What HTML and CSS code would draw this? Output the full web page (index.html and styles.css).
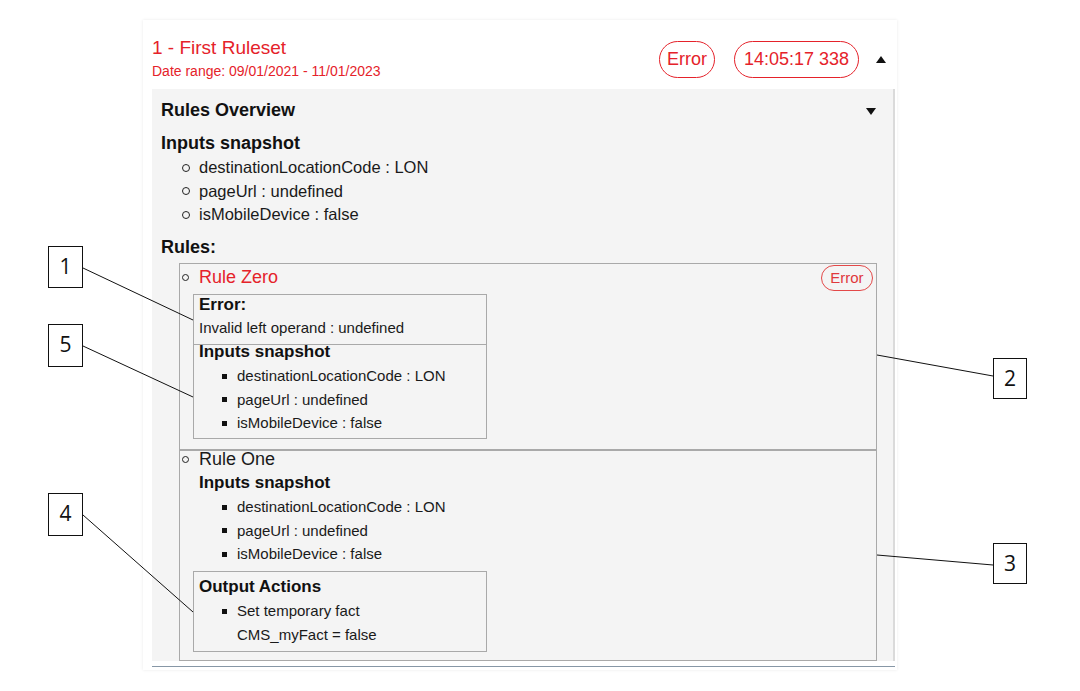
FILE: index.html
```html
<!DOCTYPE html>
<html lang="en">
<head>
<meta charset="utf-8">
<title>Ruleset log</title>
<link rel="stylesheet" href="styles.css">
</head>
<body>
<div class="page">
  <section class="card">
    <header class="rs-header">
      <div class="rs-title-block">
        <div class="rs-title">1 - First Ruleset</div>
        <div class="rs-date">Date range: 09/01/2021 - 11/01/2023</div>
      </div>
      <div class="rs-meta">
        <span class="pill pill-lg">Error</span>
        <span class="pill pill-lg pill-time">14:05:17 338</span>
        <span class="caret caret-up"></span>
      </div>
    </header>

    <div class="overview">
      <div class="overview-head">
        <h2 class="overview-title">Rules Overview</h2>
        <span class="caret caret-down"></span>
      </div>

      <h3 class="sec-title">Inputs snapshot</h3>
      <ul class="circle-list">
        <li>destinationLocationCode : LON</li>
        <li>pageUrl : undefined</li>
        <li>isMobileDevice : false</li>
      </ul>

      <h3 class="sec-title rules-title">Rules:</h3>
      <ul class="rules">
        <li class="rule rule-error">
          <div class="rule-head">
            <span class="rule-name">Rule Zero</span>
            <span class="pill pill-sm">Error</span>
          </div>
          <div class="box">
            <div class="box-sec err-sec">
              <h4 class="box-title">Error:</h4>
              <p class="err-msg">Invalid left operand : undefined</p>
            </div>
            <div class="box-sec inputs-sec">
              <h4 class="box-title tight">Inputs snapshot</h4>
              <ul class="square-list">
                <li>destinationLocationCode : LON</li>
                <li>pageUrl : undefined</li>
                <li>isMobileDevice : false</li>
              </ul>
            </div>
          </div>
        </li>
        <li class="rule rule-ok">
          <div class="rule-head">
            <span class="rule-name">Rule One</span>
          </div>
          <div class="plain-sec">
            <h4 class="box-title">Inputs snapshot</h4>
            <ul class="square-list">
              <li>destinationLocationCode : LON</li>
              <li>pageUrl : undefined</li>
              <li>isMobileDevice : false</li>
            </ul>
          </div>
          <div class="box out-box">
            <h4 class="box-title">Output Actions</h4>
            <ul class="square-list tall">
              <li>Set temporary fact<div class="sub-line">CMS_myFact = false</div></li>
            </ul>
          </div>
        </li>
      </ul>
    </div>
    <div class="card-foot"></div>
  </section>

  <svg class="callout-lines" width="1080" height="691" viewBox="0 0 1080 691" aria-hidden="true">
    <line x1="83" y1="268" x2="193" y2="320"/>
    <line x1="83" y1="346" x2="193" y2="397"/>
    <line x1="83" y1="515" x2="193" y2="612"/>
    <line x1="877" y1="355" x2="993" y2="376"/>
    <line x1="877" y1="555" x2="993" y2="565"/>
  </svg>
  <div class="callout c1">1</div>
  <div class="callout c5">5</div>
  <div class="callout c4">4</div>
  <div class="callout c2">2</div>
  <div class="callout c3">3</div>
</div>
</body>
</html>
```

FILE: styles.css
```css
* { box-sizing: border-box; }

html, body {
  margin: 0;
  padding: 0;
  background: #ffffff;
}

body {
  font-family: "Liberation Sans", Arial, sans-serif;
  color: #111111;
}

.page {
  position: relative;
  width: 1080px;
  height: 691px;
  overflow: hidden;
  padding-top: 20px;
}

/* ---------- card ---------- */
.card {
  margin-left: 143px;
  width: 754px;
  padding: 0 2px 3px 9px;
  background: #ffffff;
  box-shadow: 0 0 3px rgba(0, 0, 0, 0.09);
}

.rs-header {
  display: flex;
  justify-content: space-between;
  align-items: center;
  padding: 15px 9px 7px 0;
}

.rs-title {
  color: #e5222a;
  font-size: 19px;
  line-height: 25px;
}

.rs-date {
  color: #e5222a;
  font-size: 14px;
  line-height: 22px;
}

.rs-meta {
  display: flex;
  align-items: center;
  padding-top: 2px;
}

.pill {
  display: inline-block;
  color: #e5222a;
  border: 1.5px solid #e5222a;
  white-space: nowrap;
}

.pill-lg {
  height: 37px;
  line-height: 34px;
  padding: 0 7px;
  font-size: 18px;
  border-radius: 19px;
  margin-right: 19px;
}

.pill-lg.pill-time {
  padding: 0 9px;
  margin-right: 17px;
}

.caret {
  display: inline-block;
  width: 0;
  height: 0;
  border-left: 5.5px solid transparent;
  border-right: 5.5px solid transparent;
}

.caret-up {
  border-bottom: 7px solid #111111;
}

.caret-down {
  border-top: 7px solid #111111;
}

/* ---------- overview body ---------- */
.overview {
  background: #f4f4f4;
  padding: 9px 17px 0 9px;
  border-right: 2px solid #dadada;
}

.overview-head {
  display: flex;
  justify-content: space-between;
  align-items: center;
  height: 24px;
}

.overview-title {
  margin: 0;
  font-size: 18px;
  font-weight: bold;
  line-height: 24px;
}

.overview-head .caret-down {
  margin-top: 2px;
}

.sec-title {
  margin: 9px 0 0 0;
  font-size: 18px;
  font-weight: bold;
  line-height: 24px;
}

.rules-title {
  margin-top: 8.5px;
}

.circle-list {
  list-style: none;
  margin: 1px 0 0 0;
  padding: 0 0 0 36px;
  font-size: 16.5px;
  line-height: 23.5px;
  color: #1a1a1a;
}

.circle-list li::before {
  content: "";
  display: inline-block;
  vertical-align: middle;
  width: 6px;
  height: 6px;
  border: 1.2px solid #222;
  border-radius: 50%;
  margin: -2px 9px 0 -15px;
}

/* ---------- rules ---------- */
.rules {
  list-style: none;
  margin: 4px -1px -5px 18px;
  padding: 0;
}

.rule {
  border: 1px solid #a9a9a9;
}

.rule-error {
  padding-bottom: 10.5px;
}

.rule-ok {
  padding-bottom: 8px;
}

.rule-head {
  display: flex;
  justify-content: space-between;
  align-items: flex-start;
  padding: 0 3px 0 17px;
}

.rule-name {
  font-size: 18px;
  line-height: 26px;
}

.rule-name::before {
  content: "";
  display: inline-block;
  vertical-align: middle;
  width: 5px;
  height: 5px;
  border: 1.2px solid #222;
  border-radius: 50%;
  margin: -2px 10px 0 -15px;
}

.rule-error .rule-name {
  color: #e5222a;
}

.rule-ok .rule-head {
  height: 17px;
}

.rule-ok .rule-name {
  line-height: 17px;
  color: #1a1a1a;
}

.pill-sm {
  height: 26px;
  line-height: 23px;
  padding: 0 8.5px;
  margin-top: 1px;
  font-size: 15px;
  border-radius: 13px;
  border-color: #e34848;
  color: #e0383c;
}

.box {
  width: 294px;
  margin: 3px 0 0 13px;
  border: 1px solid #a9a9a9;
}

.box-sec {
  padding: 0 5px;
}

.err-sec {
  padding-bottom: 5px;
}

.inputs-sec {
  border-top: 1px solid #a9a9a9;
  padding-bottom: 3px;
}

.box-title {
  margin: 0;
  font-size: 17px;
  font-weight: bold;
  line-height: 20px;
}

.box-title.tight {
  line-height: 14px;
}

.err-msg {
  margin: 2px 0 0 0;
  font-size: 15px;
  line-height: 22px;
  color: #1a1a1a;
}

.square-list {
  list-style: none;
  margin: 5px 0 0 0;
  padding: 0 0 0 38px;
  font-size: 15px;
  line-height: 23.5px;
  color: #1a1a1a;
}

.square-list li::before {
  content: "";
  display: inline-block;
  vertical-align: middle;
  width: 5px;
  height: 5px;
  background: #111;
  margin: -2px 10px 0 -15px;
}

.plain-sec {
  margin: 3px 0 0 13px;
  padding: 0 6px;
}

.plain-sec .box-title {
  line-height: 24px;
}

.plain-sec .square-list {
  margin-top: 0;
}

.out-box {
  margin-top: 5.5px;
  padding: 3px 5px 4px 5px;
}

.out-box .box-title {
  line-height: 24px;
}

.square-list.tall {
  margin-top: 0;
  line-height: 24px;
}

.card-foot {
  margin-top: 10px;
  border-top: 1px solid #8797a6;
}

/* ---------- callouts ---------- */
.callout-lines {
  position: absolute;
  left: 0;
  top: 0;
  pointer-events: none;
}

.callout-lines line {
  stroke: #111111;
  stroke-width: 1;
}

.callout {
  position: absolute;
  width: 35px;
  height: 42px;
  background: #ffffff;
  border: 1px solid #111111;
  font-family: "Open Sans", "Liberation Sans", sans-serif;
  font-size: 21px;
  line-height: 38px;
  text-align: center;
  color: #111111;
}

.c1 { left: 48px; top: 246px; }
.c5 { left: 48px; top: 324px; height: 43px; }
.c4 { left: 48px; top: 493px; height: 43px; }
.c2 { left: 993px; top: 358px; width: 34px; height: 41px; }
.c3 { left: 993px; top: 543px; width: 34px; height: 41px; }
```
